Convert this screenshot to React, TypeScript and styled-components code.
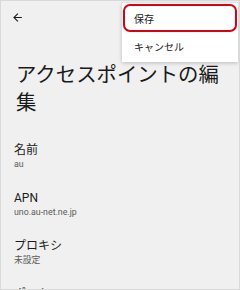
import React from "react";
import styled, { createGlobalStyle } from "styled-components";

const Global = createGlobalStyle`
  html, body { margin: 0; padding: 0; background: #ffffff; }
  * { box-sizing: border-box; }
`;

const Frame = styled.div`
  position: relative;
  width: 240px;
  height: 290px;
  border: 1px solid #d8d9d8;
  background: #eff0ef;
  overflow: hidden;
  font-family: Roboto, "Noto Sans CJK JP", sans-serif;
  color: #1c1c1c;
`;

const TopBar = styled.div`
  height: 52px;
  display: flex;
  align-items: flex-start;
  padding: 10px 0 0 10px;
`;

const BackButton = styled.div`
  width: 13px;
  height: 13px;
  display: flex;
`;

const Title = styled.h1`
  margin: 8px 0 0 0;
  padding: 0 14px 0 15px;
  font-size: 20.4px;
  line-height: 28px;
  font-weight: 400;
  color: #1a1a1a;
`;

const List = styled.div`
  display: flex;
  flex-direction: column;
  padding: 26px 0 0 13px;
`;

const Item = styled.div`
  display: flex;
  flex-direction: column;
  height: 48px;
`;

const Label = styled.div`
  font-size: 12px;
  line-height: 15px;
  color: #1c1c1c;
`;

const Value = styled.div`
  font-size: 8.8px;
  line-height: 12px;
  color: #5a5a5a;
`;

const Menu = styled.div`
  position: absolute;
  top: 2px;
  right: 1px;
  width: 116px;
  background: #ffffff;
  box-shadow: 0 1px 4px rgba(0, 0, 0, 0.22);
  display: flex;
  flex-direction: column;
  padding: 1px 1px 2px 1px;
`;

const MenuItem = styled.div<{ $selected?: boolean }>`
  height: 28px;
  display: flex;
  align-items: center;
  padding-left: 9px;
  font-size: 10px;
  color: #202020;
  border: ${(p) => (p.$selected ? "2.5px solid #d9000f" : "2.5px solid transparent")};
  border-radius: 7px;
`;

export default function App() {
  return (
    <>
      <Global />
      <Frame>
        <TopBar>
          <BackButton>
            <svg width="13" height="13" viewBox="0 0 24 24">
              <path
                fill="#1a1a1a"
                d="M20 11H7.83l5.59-5.59L12 4l-8 8 8 8 1.41-1.41L7.83 13H20v-2z"
              />
            </svg>
          </BackButton>
        </TopBar>
        <Title>アクセスポイントの編集</Title>
        <List>
          <Item>
            <Label>名前</Label>
            <Value>au</Value>
          </Item>
          <Item>
            <Label>APN</Label>
            <Value>uno.au-net.ne.jp</Value>
          </Item>
          <Item>
            <Label>プロキシ</Label>
            <Value>未設定</Value>
          </Item>
          <Item>
            <Label>ポート</Label>
            <Value>未設定</Value>
          </Item>
        </List>
        <Menu>
          <MenuItem $selected>保存</MenuItem>
          <MenuItem>キャンセル</MenuItem>
        </Menu>
      </Frame>
    </>
  );
}
